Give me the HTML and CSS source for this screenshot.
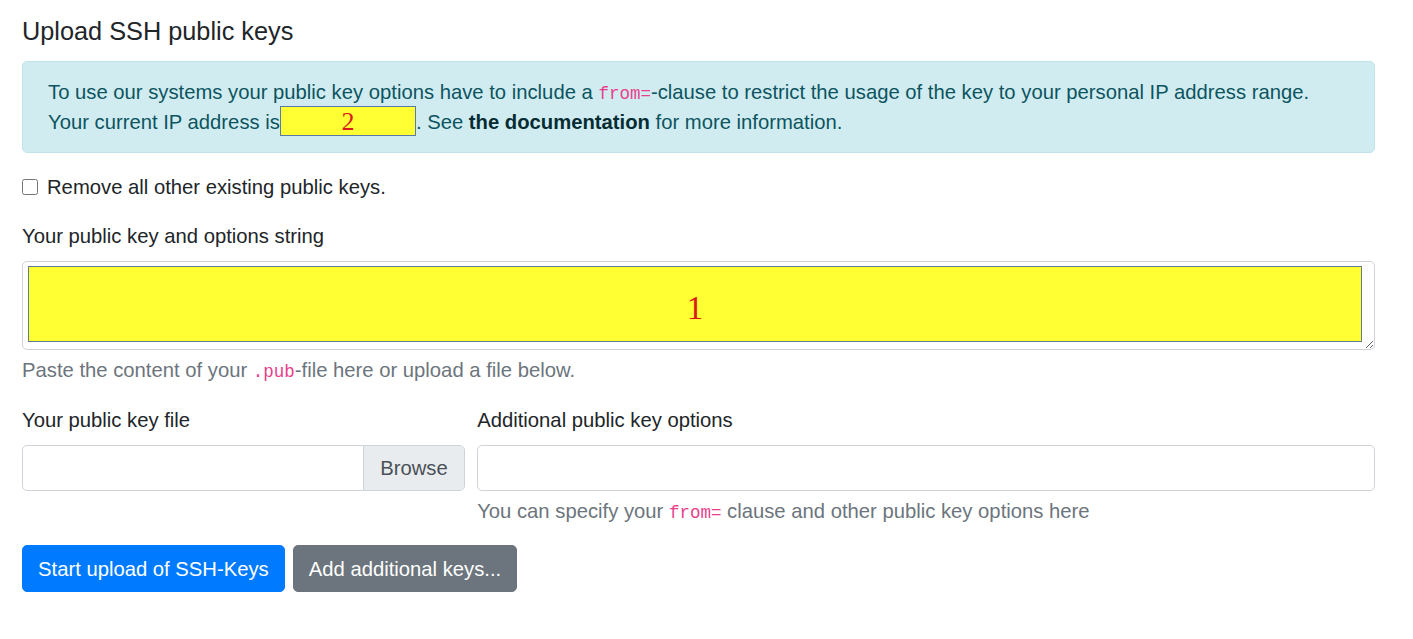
FILE: index.html
```html
<!DOCTYPE html>
<html lang="en">
<head>
<meta charset="utf-8">
<title>Upload SSH public keys</title>
<link rel="stylesheet" href="styles.css">
</head>
<body>
<main class="page">
  <h5 class="title">Upload SSH public keys</h5>
  <div class="alert">
    To use our systems your public key options have to include a <code>from=</code>-clause to restrict the usage of the key to your personal IP address range.<br>
    Your current IP address is<span class="mark mark-ip">2</span>. See <a class="alert-link" href="#">the documentation</a> for more information.
  </div>
  <div class="form-check">
    <input type="checkbox" class="check-input" id="rm">
    <label for="rm" class="check-label">Remove all other existing public keys.</label>
  </div>
  <div class="form-group">
    <label class="label" for="key">Your public key and options string</label>
    <div class="ta-wrap">
      <textarea id="key" class="textarea"></textarea>
      <div class="mark mark-key">1</div>
    </div>
    <small class="form-text">Paste the content of your <code>.pub</code>-file here or upload a file below.</small>
  </div>
  <div class="form-row">
    <div class="col">
      <label class="label">Your public key file</label>
      <div class="custom-file">
        <span class="file-name"></span>
        <span class="file-btn">Browse</span>
      </div>
    </div>
    <div class="col">
      <label class="label" for="opts">Additional public key options</label>
      <input id="opts" type="text" class="input">
      <small class="form-text">You can specify your <code>from=</code> clause and other public key options here</small>
    </div>
  </div>
  <div class="actions">
    <button class="btn btn-primary">Start upload of SSH-Keys</button>
    <button class="btn btn-secondary">Add additional keys...</button>
  </div>
</main>
</body>
</html>
```
FILE: styles.css
```css
* { box-sizing: border-box; }
html, body { margin: 0; padding: 0; background: #fff; }
body {
  font-family: "Liberation Sans", Arial, sans-serif;
  font-size: 20.25px;
  line-height: 30px;
  color: #212529;
}
.page {
  width: 1353px;
  margin-left: 22px;
  padding-top: 16px;
}
.title {
  font-size: 25.3px;
  line-height: 30px;
  font-weight: 400;
  margin: 0 0 15px;
}
.alert {
  background: #d1ecf1;
  border: 1px solid #bee5eb;
  color: #0c5460;
  border-radius: 5px;
  padding: 15px 25px;
  margin-bottom: 19px;
}
code {
  font-family: "Liberation Mono", "Courier New", monospace;
  font-size: 17.5px;
  line-height: 1;
  color: #e83e8c;
}
.alert-link {
  font-weight: 700;
  color: #062c33;
  text-decoration: none;
}
.mark {
  background: #ffff33;
  color: #d91a1a;
  font-family: "Liberation Serif", "Times New Roman", serif;
  text-align: center;
}
.mark-ip {
  display: inline-block;
  vertical-align: top;
  width: 136px;
  height: 30px;
  margin-top: -1px;
  margin-bottom: -1px;
  border: 1px solid #5b79a8;
  font-size: 26px;
  line-height: 26px;
  padding-top: 2px;
}
.form-check {
  display: flex;
  align-items: center;
  margin-bottom: 19px;
}
.check-input {
  width: 16px;
  height: 16px;
  margin: 0 9px 0 0;
}
.form-group { margin-bottom: 20px; }
.label {
  display: block;
  margin-bottom: 10px;
}
.ta-wrap { position: relative; }
.textarea {
  display: block;
  width: 100%;
  height: 89px;
  border: 1px solid #ced4da;
  border-radius: 5px;
  padding: 7px 15px;
  font: inherit;
  color: #495057;
  resize: vertical;
}
.mark-key {
  position: absolute;
  left: 6px;
  top: 5px;
  width: 1334px;
  height: 76px;
  border: 1px solid #5f7d8c;
  font-size: 33px;
  line-height: 33px;
  padding-top: 25px;
}
.form-text {
  display: block;
  margin-top: 5px;
  font-size: 20.25px;
  color: #6c757d;
}
.form-row {
  display: grid;
  grid-template-columns: 442.7px 1fr;
  column-gap: 12.5px;
  margin-bottom: 19px;
}
.custom-file {
  display: flex;
  height: 46px;
  border: 1px solid #ced4da;
  border-radius: 5px;
  overflow: hidden;
}
.file-name { flex: 1; }
.file-btn {
  background: #e9ecef;
  border-left: 1px solid #ced4da;
  color: #495057;
  padding: 7px 16px;
  line-height: 30px;
}
.input {
  display: block;
  width: 100%;
  height: 46px;
  border: 1px solid #ced4da;
  border-radius: 5px;
  padding: 7px 15px;
  font: inherit;
  color: #495057;
}
.actions {
  display: flex;
  gap: 8px;
}
.btn {
  font: inherit;
  line-height: 30px;
  padding: 7.5px 15px;
  border: 1px solid transparent;
  border-radius: 5px;
  color: #fff;
  cursor: pointer;
}
.btn-primary { background: #007bff; border-color: #007bff; }
.btn-secondary { background: #6c757d; border-color: #6c757d; }
```
